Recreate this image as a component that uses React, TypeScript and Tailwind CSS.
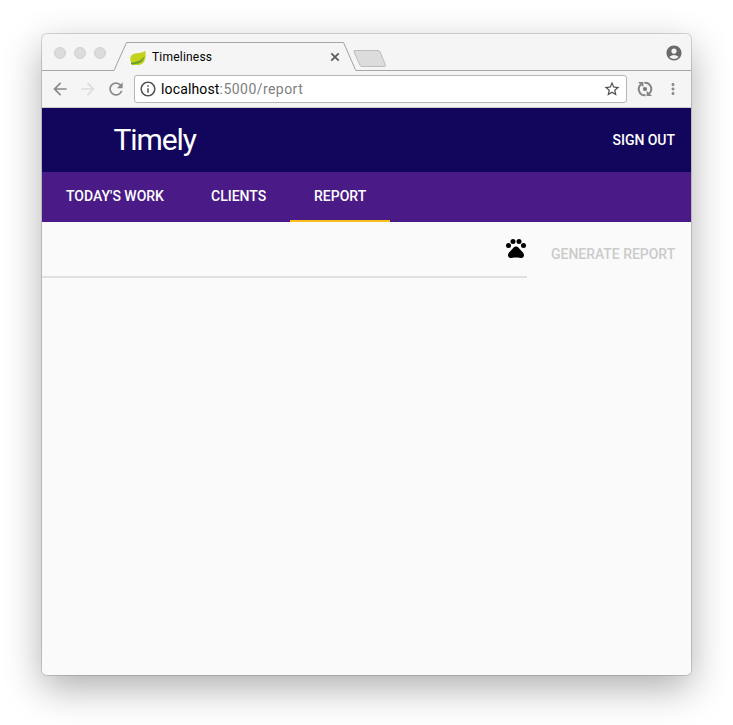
import React from "react";
import {
  MdAccountCircle,
  MdArrowBack,
  MdArrowForward,
  MdInfoOutline,
  MdMoreVert,
  MdPets,
  MdRefresh,
  MdStarBorder,
} from "react-icons/md";

function Leaf() {
  return (
    <svg width="16" height="16" viewBox="0 0 16 16" className="mt-[7px] ml-[3px] block shrink-0">
      <path d="M0.3 9C0.3 4.5 4 3.4 8 3.2C11.5 3 14 2.2 15.1 0.6C16 4.5 16 9.500 13.500 12.500C10.500 15.800 6 15.500 2.300 14.200C1 12.800 0.300 11 0.300 9Z" fill="#c3d21c" />
      <path d="M1 12.600C7 12.400 11.500 10.500 14.600 6C13.800 11 10 14 4.600 14L2.400 15L1 13.800Z" fill="#6a9a2c" />
    </svg>
  );
}

function SyncDot() {
  return (
    <svg width="16" height="16" viewBox="0 0 16 16" fill="none" stroke="#858585" strokeWidth="2" className="block">
      <path d="M8.600 14.300A6.300 6.300 0 0 1 3.800 3.400" />
      <path d="M7.400 1.700A6.300 6.300 0 0 1 12.200 12.600" />
      <path d="M1 0.900H6.400V6.300Z" fill="#858585" stroke="none" />
      <path d="M15 15.100H9.600V9.700Z" fill="#858585" stroke="none" />
      <circle cx="8" cy="8" r="2.100" fill="#757575" stroke="none" />
    </svg>
  );
}

function TabStrip() {
  return (
    <div className="flex h-[37px] shrink-0">
      <div className="flex w-[72px] gap-2 border-b border-[#a6a6a6] pt-[13px] pl-3">
        <span className="size-3 rounded-full border border-[#d0d0d0] bg-[#dcdcdc]" />
        <span className="size-3 rounded-full border border-[#d0d0d0] bg-[#dcdcdc]" />
        <span className="size-3 rounded-full border border-[#d0d0d0] bg-[#dcdcdc]" />
      </div>
      <svg width="13" height="37" className="block shrink-0">
        <path d="M0 36.500L12.500 8.500H13" fill="none" stroke="#a0a0a0" />
      </svg>
      <div className="mt-2 flex w-[216px] border-t border-[#a6a6a6]">
        <Leaf />
        <span className="mt-[5px] ml-[6px] w-[176px] text-[12px] leading-[18px] tracking-[0.200px] text-black">Timeliness</span>
        <svg width="10" height="10" viewBox="0 0 10 10" className="mt-[9px] ml-[2px] block shrink-0">
          <path d="M1.300 1.300L8.700 8.700M8.700 1.300L1.300 8.700" stroke="#5c5c5c" strokeWidth="1.800" />
        </svg>
      </div>
      <svg width="13" height="37" className="block shrink-0">
        <path d="M0 8.500H0.500L12.800 36.500" fill="none" stroke="#a0a0a0" />
      </svg>
      <div className="flex flex-1 justify-between border-b border-[#a6a6a6] pr-2">
        <svg width="35" height="18" viewBox="0 0 35 18" className="mt-4 -ml-[3px] block">
          <path d="M2 .500H25Q26.500 .500 27.100 2L32.300 14.500Q33 16.500 31 16.500H9Q7.500 16.500 6.900 15L1 2Q.500 .500 2 .500Z" fill="#dcdcdc" stroke="#bcbcbc" />
        </svg>
        <MdAccountCircle className="mt-[10px] size-[18px] text-[#6a6a6a]" />
      </div>
    </div>
  );
}

function Toolbar() {
  return (
    <div className="flex h-[37px] shrink-0 items-center border-b border-[#cdcdcd] text-[#757575]">
      <MdArrowBack className="ml-2 size-5 text-[#8a8a8a]" />
      <MdArrowForward className="ml-2 size-5 text-[#dddddd]" />
      <MdRefresh className="ml-2 size-5 text-[#8a8a8a]" />
      <div className="ml-2 flex h-[28px] w-[493px] items-center rounded-[3px] border border-[#b5b5b5] bg-white">
        <MdInfoOutline className="ml-[4px] size-[18px] text-[#505050]" />
        <span className="ml-1 flex-1 text-[14px] leading-5 tracking-[0.450px] text-[#808080]">
          <span className="tracking-[0.150px] text-black">localhost</span>:5000/report
        </span>
        <MdStarBorder className="mr-[5px] size-[18px] text-[#505050]" />
      </div>
      <div className="ml-[10px]"><SyncDot /></div>
      <MdMoreVert className="ml-[11px] size-[18px] text-[#8a8a8a]" />
    </div>
  );
}

export default function App() {
  return (
    <div className="h-[725px] w-[733px] overflow-hidden bg-white pt-[34px] pl-[42px] font-['Roboto',sans-serif]">
      <div className="flex h-[641px] w-[649px] flex-col overflow-hidden rounded-[5px] bg-[#f5f5f5] shadow-[0_0_0_1px_rgba(0,0,0,0.140),0_13px_38px_rgba(0,0,0,0.320)]">
        <TabStrip />
        <Toolbar />
        <header className="flex h-16 shrink-0 items-center justify-between bg-[#12065c] pr-4 pl-[72px] text-white">
          <h1 className="-ml-[0.500px] text-[30px] leading-9 font-[380] tracking-[-1.100px]">Timely</h1>
          <button className="text-[14px] font-medium tracking-[-0.030px]">SIGN OUT</button>
        </header>
        <nav className="flex h-[50px] shrink-0 bg-[#4a1b87] text-[14px] leading-[48px] font-medium text-white">
          <a className="w-[145px] pl-6">TODAY'S WORK</a>
          <a className="w-[103px] pl-6">CLIENTS</a>
          <a className="w-[100px] border-b-2 border-[#fbbc1e] pl-6">REPORT</a>
        </nav>
        <main className="flex flex-1 items-start bg-[#fafafa]">
          <div className="flex h-14 w-[485px] justify-end border-b-2 border-[#e0e0e0] pt-[14px]">
            <MdPets className="-mr-[0.500px] size-6 text-black" />
          </div>
          <button className="mt-[22px] ml-6 text-[14px] leading-5 font-medium tracking-[-0.030px] text-[#cbcbcb]">GENERATE REPORT</button>
        </main>
      </div>
    </div>
  );
}
